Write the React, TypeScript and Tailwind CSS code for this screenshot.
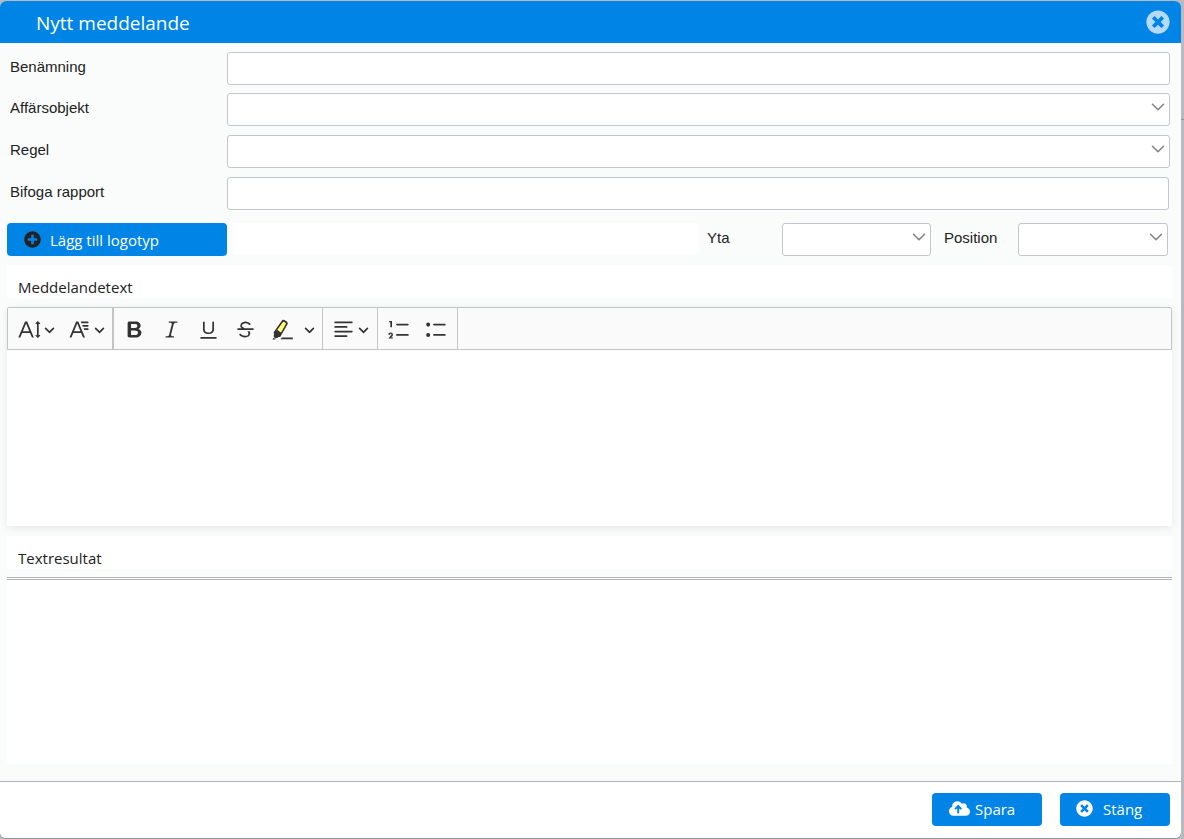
import clsx from "clsx";
import { ChevronDown } from "lucide-react";
import type { FC, ReactNode } from "react";
import { FaPlusCircle, FaTimesCircle } from "react-icons/fa";

const fieldClasses =
  "block h-[33px] w-full rounded-[3px] border border-[#c3c6cb] bg-white px-2 text-[15px] outline-none focus:border-[#0084e6]";

const uiFont = "font-['Segoe_UI','Open_Sans',sans-serif]";

type SelectFieldProps = {
  id: string;
  className?: string;
};

const SelectField: FC<SelectFieldProps> = ({ id, className }) => (
  <div className={clsx("relative", className)}>
    <select id={id} className={clsx(fieldClasses, "appearance-none pr-7")}>
      <option value="" />
    </select>
    <ChevronDown className="pointer-events-none absolute top-[3px] right-px size-[22px] text-[#85868c]" strokeWidth={1.75} />
  </div>
);

type FormRowProps = {
  id: string;
  label: string;
  className?: string;
  children: ReactNode;
};

const FormRow: FC<FormRowProps> = ({ id, label, className, children }) => (
  <div className={clsx("flex", className)}>
    <label htmlFor={id} className="w-[220px] shrink-0 pt-1 pl-[3px] text-[15px] leading-[22px]">
      {label}
    </label>
    <div className="grow">{children}</div>
  </div>
);

const icons = {
  fontSize:
    "M9.816 11.5 7.038 4.785 4.261 11.5h5.555Zm.62 1.5H3.641l-1.666 4.028H.312l5.789-14h1.875l5.789 14h-1.663L10.436 13Zm7.55 2.279.779-.779.707.707-2.265 2.265-2.193-2.265.707-.707.765.765V4.825c0-.042 0-.083.002-.123l-.77.77-.707-.707L17.207 2.5l2.265 2.265-.707.707-.782-.782c.002.043.003.089.003.135v10.454Z",
  fontFamily:
    "M11.03 3h6.149a.75.75 0 1 1 0 1.5h-5.514L11.03 3zm1.27 3h4.879a.75.75 0 1 1 0 1.5h-4.244L12.3 6zm1.27 3h3.609a.75.75 0 1 1 0 1.5h-2.973L13.57 9zm-2.754 2.5L8.038 4.785 5.261 11.5h5.555zm.62 1.5H4.641l-1.666 4.028H1.312l5.789-14h1.875l5.789 14h-1.663L11.436 13z",
  bold: "M10.187 17H5.773c-.637 0-1.092-.138-1.364-.415-.273-.277-.409-.718-.409-1.323V4.738c0-.617.14-1.062.419-1.332.279-.27.73-.406 1.354-.406h4.68c.69 0 1.288.041 1.793.124.506.083.96.242 1.36.478.341.197.644.447.906.75a3.262 3.262 0 0 1 .808 2.162c0 1.401-.722 2.426-2.167 3.075C15.05 10.175 16 11.315 16 13.01a3.756 3.756 0 0 1-2.296 3.504 6.1 6.1 0 0 1-1.517.377c-.571.073-1.238.11-2 .11zm-.217-6.217H7v4.087h3.069c1.977 0 2.965-.69 2.965-2.072 0-.707-.256-1.22-.768-1.537-.512-.319-1.277-.478-2.296-.478zM7 5.13v3.619h2.606c.729 0 1.292-.067 1.69-.2a1.6 1.6 0 0 0 .91-.765c.165-.267.247-.566.247-.897 0-.707-.26-1.176-.778-1.409-.519-.232-1.31-.348-2.375-.348H7z",
  italic:
    "m9.586 14.633.021.004c-.036.335.095.655.393.962.082.083.173.15.274.201h1.474a.6.6 0 1 1 0 1.2H5.304a.6.6 0 0 1 0-1.2h1.15c.474-.07.809-.182 1.005-.334.157-.122.291-.32.404-.597l2.416-9.55a1.053 1.053 0 0 0-.281-.823 1.12 1.12 0 0 0-.442-.296H8.15a.6.6 0 0 1 0-1.2h6.443a.6.6 0 1 1 0 1.2h-1.195c-.376.056-.65.155-.823.296-.215.175-.423.439-.623.79l-2.366 9.347z",
  underline:
    "M3 18v-1.5h14V18zm2.2-8V3.6c0-.4.4-.6.8-.6.3 0 .7.2.7.6v6.2c0 2 1.3 2.8 3.2 2.8 1.9 0 3.4-.9 3.4-2.9V3.6c0-.3.4-.5.8-.5.3 0 .7.2.7.5V10c0 2.7-2.2 4-4.9 4-2.6 0-4.7-1.2-4.7-4z",
  strike:
    "M7 16.4c-.8-.4-1.5-.9-2.2-1.5a.6.6 0 0 1-.2-.5l.3-.6h1c1 1.2 2.1 1.7 3.7 1.7 1 0 1.8-.3 2.3-.6.6-.4.6-1.2.6-1.3.2-1.2-.9-2.1-.9-2.1h2.1c.3.7.4 1.2.4 1.7v.8l-.6 1.2c-.6.8-1.1 1-1.6 1.2a6 6 0 0 1-2.4.6c-1 0-1.8-.3-2.5-.6zM6.8 9 6 8.3c-.4-.5-.5-.8-.5-1.6 0-.7.1-1.3.5-1.8.4-.6 1-1 1.6-1.3a6.3 6.3 0 0 1 4.7 0 4 4 0 0 1 1.7 1l.3.7c0 .1.2.4-.2.7-.4.2-.9.1-1 0a3 3 0 0 0-1.2-1c-.4-.2-1-.3-2-.4-.7 0-1.4.2-2 .6-.8.6-1 .8-1 1.5 0 .8.5 1 1.2 1.5.6.4 1.1.7 1.9 1H6.8zM3 10.5V9h14v1.5H3z",
  marker:
    "M2.556 16.727l.234-.348c-.297-.151-.462-.293-.498-.426-.036-.137.002-.416.115-.837.094-.25.15-.449.169-.595a4.495 4.495 0 0 0 0-.725c-.209-.621-.303-1.041-.284-1.26.02-.218.178-.506.475-.862l6.77-9.414c.539-.91 1.605-.85 3.199.18 1.594 1.032 2.188 1.928 1.784 2.686l-5.877 10.36c-.158.412-.333.673-.526.782-.193.108-.604.179-1.232.21-.362.131-.608.237-.738.318-.13.081-.305.238-.526.47-.293.265-.504.397-.632.397-.096 0-.27-.075-.524-.226l-.31.41-1.6-1.12zm-.279.415l1.575 1.103-.392.515H1.19l1.087-1.618zm8.1-13.656l-4.953 6.9L8.75 12.57l4.247-7.574c.175-.25-.188-.647-1.092-1.192-.903-.546-1.412-.652-1.528-.32zM8.244 18.5L9.59 17h9.406v1.5H8.245z",
  align:
    "M2.75 3h14.5a.75.75 0 0 1 0 1.5H2.75a.75.75 0 0 1 0-1.5zm0 4h9.93a.75.75 0 0 1 0 1.5H2.75a.75.75 0 0 1 0-1.5zm0 4h14.5a.75.75 0 0 1 0 1.5H2.75a.75.75 0 0 1 0-1.5zm0 4h9.93a.75.75 0 0 1 0 1.5H2.75a.75.75 0 0 1 0-1.5z",
  numbered:
    "M7 5.75c0 .414.336.75.75.75h9.5a.75.75 0 1 0 0-1.5h-9.5a.75.75 0 0 0-.75.75zM3.5 3v5H2V3.7H1v-1h2.5V3zM.343 17.857l2.59-3.257H2.92a.6.6 0 1 0-1.04 0H.302a2 2 0 1 1 3.995 0h-.001c-.048.405-.16.734-.333.988-.175.254-.59.692-1.244 1.312H4.3v1h-4l.043-.043zM7 14.75a.75.75 0 0 1 .75-.75h9.5a.75.75 0 1 1 0 1.5h-9.5a.75.75 0 0 1-.75-.75z",
  bulleted:
    "M7 5.75c0 .414.336.75.75.75h9.5a.75.75 0 1 0 0-1.5h-9.5a.75.75 0 0 0-.75.75zM1 5.75a1.75 1.75 0 1 0 3.5 0 1.75 1.75 0 1 0-3.5 0zM7 14.75c0 .414.336.75.75.75h9.5a.75.75 0 1 0 0-1.5h-9.5a.75.75 0 0 0-.75.75zM1 14.75a1.75 1.75 0 1 0 3.5 0 1.75 1.75 0 1 0-3.5 0z",
};

type ToolIconName = keyof typeof icons;

const ToolIcon: FC<{ name: ToolIconName }> = ({ name }) => (
  <svg viewBox="0 0 20 20" className="size-[23px] shrink-0 fill-[#333333]" aria-hidden="true">
    {name === "marker" && (
      <path className="fill-[#fdfd77]" d="M10.798 1.59 3.002 12.875l1.895 1.852 2.521 1.402 6.997-12.194z" />
    )}
    <path d={icons[name]} />
  </svg>
);

const ToolArrow = () => (
  <svg viewBox="0 0 10 10" className="size-[11px] shrink-0 fill-[#333333]" aria-hidden="true">
    <path d="M.941 4.523a.75.75 0 1 1 1.06-1.06l3.006 3.005 3.005-3.005a.75.75 0 1 1 1.06 1.06l-3.549 3.55a.75.75 0 0 1-1.168-.136L.941 4.523z" />
  </svg>
);

const CloudUploadIcon: FC<{ className?: string }> = ({ className }) => (
  <svg viewBox="0 32 640 448" className={className} aria-hidden="true">
    <path
      fill="currentColor"
      d="M537.6 226.6c4.1-10.7 6.4-22.4 6.4-34.6 0-53-43-96-96-96-19.7 0-38.1 6-53.3 16.2C367 64.2 315.3 32 256 32c-88.4 0-160 71.6-160 160 0 2.7.1 5.4.2 8.1C40.2 219.8 0 273.2 0 336c0 79.5 64.5 144 144 144h368c70.7 0 128-57.3 128-128 0-61.9-44-113.6-102.4-125.4z"
    />
    <path className="stroke-[#0084e6]" fill="none" strokeWidth={60} d="M280 400V190M185 275l95-95 95 95" />
  </svg>
);

const ToolButton: FC<{ name: ToolIconName; label: string }> = ({ name, label }) => (
  <button type="button" aria-label={label} className="flex h-full w-[37px] items-center justify-center">
    <ToolIcon name={name} />
  </button>
);

const ToolDropdown: FC<{ name: ToolIconName; label: string }> = ({ name, label }) => (
  <button type="button" aria-label={label} className="flex h-full items-center gap-[3px]">
    <ToolIcon name={name} />
    <ToolArrow />
  </button>
);

const ToolGroup: FC<{ className: string; children: ReactNode }> = ({ className, children }) => (
  <div className={clsx("flex h-full items-center border-r border-[#c4c4c4] pt-0.5", className)}>{children}</div>
);

const EditorToolbar = () => (
  <div
    role="toolbar"
    aria-label="Textformatering"
    className="flex h-[43px] items-center rounded-t-[2px] border border-[#c4c4c4] bg-[#fafafa]"
  >
    <ToolGroup className="gap-[13px] border-r-2 pr-[7px] pl-2.5">
      <ToolDropdown name="fontSize" label="Teckenstorlek" />
      <ToolDropdown name="fontFamily" label="Teckensnitt" />
    </ToolGroup>
    <ToolGroup className="pr-[5px] pl-0.5">
      <ToolButton name="bold" label="Fet" />
      <ToolButton name="italic" label="Kursiv" />
      <ToolButton name="underline" label="Understruken" />
      <ToolButton name="strike" label="Genomstruken" />
      <ToolButton name="marker" label="Överstrykning" />
      <button type="button" aria-label="Välj färg" className="flex h-full w-4 items-center justify-center">
        <ToolArrow />
      </button>
    </ToolGroup>
    <ToolGroup className="pr-2 pl-[9px]">
      <ToolDropdown name="align" label="Textjustering" />
    </ToolGroup>
    <ToolGroup className="pr-0.5 pl-[3px]">
      <ToolButton name="numbered" label="Numrerad lista" />
      <ToolButton name="bulleted" label="Punktlista" />
    </ToolGroup>
  </div>
);

const SectionTitle: FC<{ id: string; children: ReactNode }> = ({ id, children }) => (
  <h2 id={id} className={clsx("h-[33px] bg-white pt-3 pl-[11px] text-[15px] leading-[21px]", uiFont)}>
    {children}
  </h2>
);

const primaryButton = clsx("flex h-[33px] items-center rounded-[4px] bg-[#0084e6] text-[15px] text-white", uiFont);

export default function App() {
  return (
    <div className="flex min-h-screen bg-[#b9bac0] pt-px font-['Liberation_Sans',Arial,sans-serif] text-[#222222]">
      <div
        role="dialog"
        aria-labelledby="dialog-title"
        className="mb-px flex grow flex-col overflow-hidden rounded-[6px] bg-[#fafcfb] shadow-[0_1px_0_#8e92a3]"
      >
        <header className="flex h-[42px] shrink-0 items-center justify-between bg-[#0084e6] pr-[11px] pl-9 text-white">
          <h1 id="dialog-title" className={clsx("pt-0.5 text-[19px]", uiFont)}>
            Nytt meddelande
          </h1>
          <button type="button" aria-label="Stäng dialog" className="text-[#b5daf7]">
            <FaTimesCircle className="size-6" />
          </button>
        </header>

        <form className="grow pr-[9px] pb-[17px] pl-[7px]">
          <div className="pt-[9px] pr-0.5">
            <FormRow id="benamning" label="Benämning" className="mb-2">
              <input id="benamning" type="text" className={fieldClasses} />
            </FormRow>
            <FormRow id="affarsobjekt" label="Affärsobjekt" className="mb-[9px]">
              <SelectField id="affarsobjekt" />
            </FormRow>
            <FormRow id="regel" label="Regel" className="mb-[9px]">
              <SelectField id="regel" />
            </FormRow>
            <FormRow id="rapport" label="Bifoga rapport" className="mr-px mb-[13px]">
              <input id="rapport" type="text" className={fieldClasses} />
            </FormRow>
          </div>

          <div className="mr-1 mb-[9px] flex text-[15px]">
            <button type="button" className={clsx(primaryButton, "w-[220px] shrink-0 pl-[17px]")}>
              <FaPlusCircle className="mr-[9px] size-[17px] text-[#222222]" />
              <span className="pt-0.5">Lägg till logotyp</span>
            </button>
            <div className="ml-1.5 h-[31px] grow bg-white" />
            <label htmlFor="yta" className="w-[83px] shrink-0 pt-1 pl-2 leading-[22px]">
              Yta
            </label>
            <SelectField id="yta" className="w-[149px] shrink-0" />
            <label htmlFor="position" className="w-[87px] shrink-0 pt-1 pl-[13px] leading-[22px]">
              Position
            </label>
            <SelectField id="position" className="w-[150px] shrink-0" />
          </div>

          <SectionTitle id="meddelandetext">Meddelandetext</SectionTitle>
          <div className="mt-[9px] mb-2.5 bg-white shadow-[0_2px_8px_rgba(0,0,0,0.08)]">
            <EditorToolbar />
            <textarea
              aria-labelledby="meddelandetext"
              className="block h-44 w-full resize-none px-3 py-2 text-[15px] outline-none"
            />
          </div>

          <SectionTitle id="textresultat">Textresultat</SectionTitle>
          <div className="mt-2 border-t-3 border-t-[#b4b4b4] bg-white [border-top-style:double]">
            <textarea
              aria-labelledby="textresultat"
              readOnly
              className="block h-46 w-full resize-none px-3 py-2 text-[15px] outline-none"
            />
          </div>
        </form>

        <footer className="flex shrink-0 justify-end gap-[18px] border-t border-[#b0b3bf] bg-white pt-[11px] pr-[11px] pb-3">
          <button type="button" className={clsx(primaryButton, "w-[110px] pl-[17px]")}>
            <CloudUploadIcon className="mr-[5px] mb-[3px] h-[15px] w-[21px]" />
            Spara
          </button>
          <button type="button" className={clsx(primaryButton, "w-[110px] pl-4")}>
            <FaTimesCircle className="mr-2.5 mb-[3px] size-[17px]" />
            Stäng
          </button>
        </footer>
      </div>
      <div className="w-[3px] shrink-0">
        <div className="h-[119px] border-b border-[#8f9096]" />
      </div>
    </div>
  );
}
